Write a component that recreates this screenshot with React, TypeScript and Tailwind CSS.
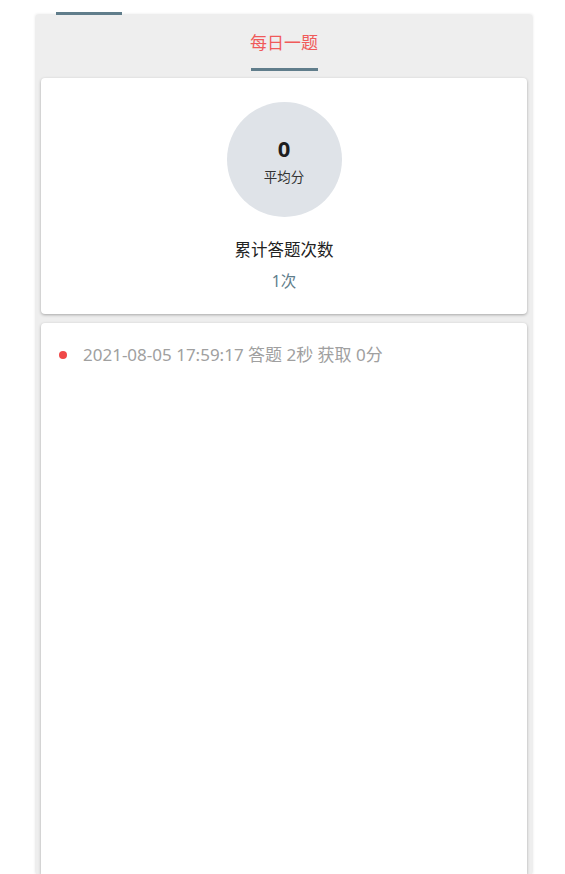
import React from "react";

export default function App() {
  return (
    <div
      className="w-[565px] h-[874px] bg-white overflow-hidden"
      style={{ fontFamily: '"Noto Sans", "Noto Sans CJK SC", sans-serif' }}
    >
      <div className="h-[15px] relative">
        <div className="absolute left-[56px] top-[12px] w-[66px] h-[3px] bg-[#607d8b]" />
      </div>
      <div className="ml-[36px] mr-[33px] h-[859px] bg-[#eeeeee] shadow-[0_0_3px_rgba(0,0,0,0.18)] flex flex-col">
        <div className="h-[63px] flex flex-col items-center">
          <div className="mt-[19px] text-[17px] leading-[18px] text-[#f05a5a]">每日一题</div>
          <div className="mt-[16px] w-[67px] h-[3px] bg-[#607d8b]" />
        </div>
        <div className="mx-[5px] h-[236px] bg-white rounded-[4px] shadow-[0_1px_3px_rgba(0,0,0,0.3)] flex flex-col items-center">
          <div className="mt-[24px] w-[115px] h-[115px] rounded-full bg-[#dfe3e8] flex flex-col items-center pt-[35px]">
            <div className="text-[22px] leading-[22px] font-bold text-[#1e1e1e]" style={{ fontFamily: '"Open Sans", "Noto Sans", sans-serif' }}>0</div>
            <div className="text-[13.5px] leading-[16px] text-[#333] mt-[10px]">平均分</div>
          </div>
          <div className="mt-[23px] text-[16.5px] leading-[20px] text-[#222]">累计答题次数</div>
          <div className="mt-[11px] text-[15.5px] leading-[20px] text-[#607d8b]">1次</div>
        </div>
        <div className="mx-[5px] mt-[9px] flex-1 bg-white rounded-t-[4px] shadow-[0_1px_3px_rgba(0,0,0,0.3)] px-[18px] pt-[22px]">
          <div className="flex items-center gap-[16px]">
            <div className="w-[8px] h-[8px] rounded-full bg-[#f04848]" />
            <div className="text-[17px] leading-[20px] text-[#a0a0a0]">2021-08-05 17:59:17 答题 2秒 获取 0分</div>
          </div>
        </div>
      </div>
    </div>
  );
}
